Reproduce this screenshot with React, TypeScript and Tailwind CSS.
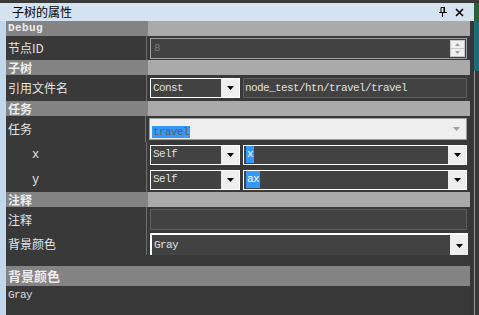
import React from "react";

const cjk = { fontFamily: '"Noto Sans CJK SC", sans-serif' };
const mono = { fontFamily: '"Liberation Mono", "Noto Sans CJK SC", monospace' };

function Arrow({ color = "#000" }: { color?: string }) {
  return (
    <svg width="7" height="4" viewBox="0 0 7 4">
      <polygon points="0,0 7,0 3.5,4" fill={color} />
    </svg>
  );
}

function Category({ label, latin }: { label: string; latin?: boolean }) {
  return (
    <div className="flex h-[15px] shrink-0">
      <div
        className="w-[142px] bg-[#848484] flex items-center pl-[2px] font-bold text-[#eeeeee] text-[12px] leading-none"
        style={latin ? { ...mono, fontSize: 11, letterSpacing: 0.4 } : cjk}
      >
        {label}
      </div>
      <div className="flex-1 bg-[#aaaaaa]" />
    </div>
  );
}

function Prop({
  label,
  h,
  indent,
  children,
}: {
  label: string;
  h: string;
  indent?: boolean;
  children?: React.ReactNode;
}) {
  return (
    <div className={`flex shrink-0 ${h}`}>
      <div
        className={`w-[140px] bg-[#393939] flex items-center text-[12px] text-[#e6e6e6] ${indent ? "pl-[26px]" : "pl-[2px]"}`}
        style={indent ? mono : cjk}
      >
        {label}
      </div>
      <div className="flex-1 bg-[#393939] border-l border-[#6e6e6e] flex items-center pl-[3px] pr-[3px] gap-[3px]">
        {children}
      </div>
    </div>
  );
}

function Combo({ text, w, sel }: { text: string; w: string; sel?: boolean }) {
  return (
    <div className={`${w} h-[20px] border border-white bg-[#424242] flex items-stretch`}>
      <div className="flex-1 flex items-center pl-[2px] text-[11px] text-[#e0e0e0] tracking-[-0.6px]" style={mono}>
        {sel ? <span className="bg-[#3399ff] text-white px-[1px]">{text}</span> : text}
      </div>
      <div className="w-[18px] bg-[#eeeeee] flex items-center justify-center">
        <Arrow />
      </div>
    </div>
  );
}

export default function App() {
  return (
    <div className="w-[479px] h-[315px] bg-[#383838] flex flex-col overflow-hidden">
      <div className="h-[3px] bg-[#3a3a3a] shrink-0" />
      <div className="flex flex-1 min-h-0">
        <div className="w-[474px] flex flex-col">
          {/* title bar */}
          <div className="h-[18px] bg-[#d5e3f1] flex items-center shrink-0 pl-[12px] pr-[10px]">
            <span className="text-[12px] text-black flex-1" style={cjk}>
              子树的属性
            </span>
            <svg width="8" height="10" viewBox="0 0 8 10" className="mr-[8px]">
              <path d="M2 0.5h3.5v5H2z" fill="none" stroke="#000" />
              <rect x="4.5" y="0" width="1.5" height="6" fill="#000" />
              <rect x="0" y="5" width="8" height="1" fill="#000" />
              <rect x="3" y="6" width="1" height="4" fill="#000" />
            </svg>
            <svg width="9" height="9" viewBox="0 0 9 9">
              <path d="M1 1L8 8M8 1L1 8" stroke="#000" strokeWidth="1.6" />
            </svg>
          </div>
          <div className="flex flex-1 min-h-0">
            <div className="w-[6px] bg-[#c2d7ec] shrink-0" />
            <div className="w-[464px] flex flex-col">
              {/* property grid */}
              <div className="h-[234px] flex flex-col overflow-hidden shrink-0">
                <Category label="Debug" latin />
                <Prop label="节点ID" h="h-[24px]">
                  <div className="flex-1 h-[21px] border border-[#a0a0a0] bg-[#424242] flex items-center pl-[3px] pr-[1px]">
                    <span className="flex-1 text-[11px] text-[#7a7a7a]" style={mono}>
                      8
                    </span>
                    <div className="w-[15px] h-[17px] bg-[#f0f0f0] border border-[#c8c8c8] flex flex-col">
                      <div className="flex-1 flex items-center justify-center border-b border-[#c8c8c8]">
                        <svg width="5" height="3" viewBox="0 0 5 3">
                          <polygon points="0,3 5,3 2.5,0" fill="#a0a0a0" />
                        </svg>
                      </div>
                      <div className="flex-1 flex items-center justify-center">
                        <svg width="5" height="3" viewBox="0 0 5 3">
                          <polygon points="0,0 5,0 2.5,3" fill="#a0a0a0" />
                        </svg>
                      </div>
                    </div>
                  </div>
                </Prop>
                <Category label="子树" />
                <Prop label="引用文件名" h="h-[26px]">
                  <Combo text="Const" w="w-[90px]" />
                  <div
                    className="w-[224px] h-[20px] border border-[#5e5e5e] bg-[#424242] flex items-center pl-[1px] text-[11px] text-[#e0e0e0] tracking-[-0.6px]"
                    style={mono}
                  >
                    node_test/htn/travel/travel
                  </div>
                </Prop>
                <Category label="任务" />
                <Prop label="任务" h="h-[26px]">
                  <div className="w-[318px] h-[22px] border border-[#9c9c9c] bg-[#efefef] flex items-center pl-[2px] pr-[6px]">
                    <span className="flex-1">
                      <span
                        className="bg-[#3399ff] text-[#6e5c48] text-[11px] tracking-[-0.6px] px-[1px]"
                        style={mono}
                      >
                        travel
                      </span>
                    </span>
                    <Arrow color="#a0a0a0" />
                  </div>
                </Prop>
                <Prop label="x" h="h-[25px]" indent>
                  <Combo text="Self" w="w-[90px]" />
                  <Combo text="x" w="w-[224px]" sel />
                </Prop>
                <Prop label="y" h="h-[25px]" indent>
                  <Combo text="Self" w="w-[90px]" />
                  <Combo text="ax" w="w-[224px]" sel />
                </Prop>
                <Category label="注释" />
                <Prop label="注释" h="h-[25px]">
                  <div className="w-[317px] h-[21px] border border-[#5e5e5e] bg-[#424242]" />
                </Prop>
                <div className="flex shrink-0 h-[23px]">
                  <div className="w-[140px] bg-[#393939] flex items-center pl-[2px] text-[12px] text-[#e6e6e6]" style={cjk}>
                    背景颜色
                  </div>
                  <div className="flex-1 bg-[#393939] border-l border-[#6e6e6e] pl-[3px] pr-[2px] pt-[1px]">
                    <div className="w-[318px] h-[30px] border-t-2 border-l-2 border-white bg-[#424242] flex">
                      <div
                        className="flex-1 h-[21px] flex items-center pl-[2px] text-[11px] text-[#e0e0e0] tracking-[-0.6px]"
                        style={mono}
                      >
                        Gray
                      </div>
                      <div className="w-[18px] h-[21px] bg-[#eeeeee] flex items-center justify-center">
                        <Arrow />
                      </div>
                    </div>
                  </div>
                </div>
              </div>
              <div className="h-[11px] shrink-0" />
              {/* help panel */}
              <div
                className="h-[20px] bg-[#848484] flex items-center pl-[2px] text-[13px] font-bold text-[#eeeeee] shrink-0"
                style={cjk}
              >
                背景颜色
              </div>
              <div className="pl-[2px] pt-[1px] text-[11px] text-[#dddddd] tracking-[-0.6px]" style={mono}>
                Gray
              </div>
            </div>
            <div className="w-[4px] bg-[#363636] shrink-0" />
          </div>
        </div>
        <div className="w-[5px] flex flex-col">
          <div className="h-[18px] bg-[#2d5f3a]" />
          <div className="h-[50px] bg-[#1f6a78]" />
          <div className="flex-1 border-l border-[#9a9a9a] bg-[#383838]" />
        </div>
      </div>
    </div>
  );
}
